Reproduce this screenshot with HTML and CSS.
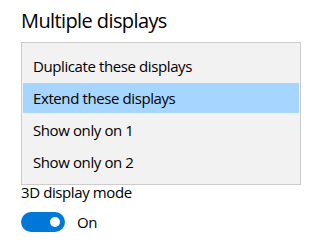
FILE: index.html
```html
<!DOCTYPE html>
<html lang="en">
<head>
    <meta charset="UTF-8">
    <meta name="viewport" content="width=device-width, initial-scale=1.0">
    <title>Multiple displays</title>
    <link rel="stylesheet" href="styles.css">
</head>
<body>
    <h1 class="title">Multiple displays</h1>

    <!-- Lista desplegable abierta -->
    <ul class="dropdown">
        <li class="option">Duplicate these displays</li>
        <li class="option selected">Extend these displays</li>
        <li class="option">Show only on 1</li>
        <li class="option">Show only on 2</li>
    </ul>

    <div class="label">3D display mode</div>

    <div class="toggle-row">
        <span class="toggle"><span class="knob"></span></span>
        <span class="toggle-text">On</span>
    </div>
</body>
</html>
```

FILE: styles.css
```css
body {
    font-family: "Open Sans", Arial, sans-serif;
    margin: 0;
    padding: 0 21px;
    background-color: #ffffff;
    color: #000000;
    font-size: 15px;
    letter-spacing: -0.4px;
}

.title {
    margin: 7px 0 7px 0;
    font-size: 20px;
    font-weight: normal;
    line-height: 28px;
    letter-spacing: -0.6px;
}

.dropdown {
    list-style: none;
    margin: 0;
    padding: 8px 1px 7px 1px;
    width: 276px;
    background-color: #f2f2f2;
    border: 1px solid #cccccc;
    display: flex;
    flex-direction: column;
    gap: 2px;
}

.option {
    height: 30px;
    line-height: 30px;
    padding-left: 10px;
}

.option.selected {
    background-color: #a6d6ff;
}

.label {
    line-height: 14px;
}

.toggle-row {
    margin-top: 13px;
    display: flex;
    align-items: center;
    gap: 12px;
    line-height: 20px;
}

.toggle {
    width: 44px;
    height: 20px;
    border-radius: 10px;
    background-color: #0078d7;
    display: flex;
    align-items: center;
    justify-content: flex-end;
    padding-right: 5px;
    box-sizing: border-box;
}

.knob {
    width: 10px;
    height: 10px;
    border-radius: 50%;
    background-color: #ffffff;
}
```
